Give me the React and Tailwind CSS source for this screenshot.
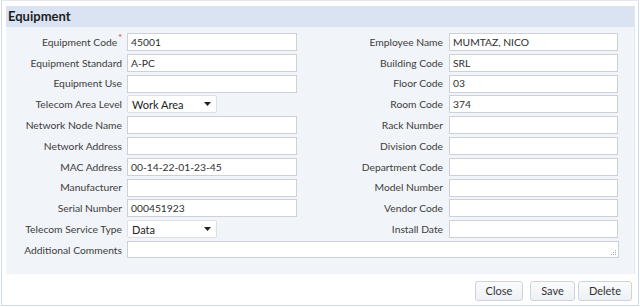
import React from 'react';

const leftFields = [
  { label: 'Equipment Code', value: '45001', required: true },
  { label: 'Equipment Standard', value: 'A-PC' },
  { label: 'Equipment Use', value: '' },
  { label: 'Telecom Area Level', value: 'Work Area', select: true },
  { label: 'Network Node Name', value: '' },
  { label: 'Network Address', value: '' },
  { label: 'MAC Address', value: '00-14-22-01-23-45' },
  { label: 'Manufacturer', value: '' },
  { label: 'Serial Number', value: '000451923' },
  { label: 'Telecom Service Type', value: 'Data', select: true },
];

const rightFields = [
  { label: 'Employee Name', value: 'MUMTAZ, NICO' },
  { label: 'Building Code', value: 'SRL' },
  { label: 'Floor Code', value: '03' },
  { label: 'Room Code', value: '374' },
  { label: 'Rack Number', value: '' },
  { label: 'Division Code', value: '' },
  { label: 'Department Code', value: '' },
  { label: 'Model Number', value: '' },
  { label: 'Vendor Code', value: '' },
  { label: 'Install Date', value: '' },
];

const TextBox = ({ value, width }) => (
  <div
    className={`${width} h-[18px] bg-white border border-[#cdd0d8] flex items-center px-[3px] text-[10.3px] text-[#2e2e2e] leading-none`}
  >
    {value}
  </div>
);

const Select = ({ value }) => (
  <div className="w-[90px] h-[18px] bg-white border border-[#dde0e6] rounded-[2px] flex items-center justify-between pl-[4px] pr-[5px] text-[11px] text-[#222] leading-none">
    <span>{value}</span>
    <svg width="7" height="4" viewBox="0 0 7 4">
      <path d="M0 0h7L3.5 4z" fill="#222" />
    </svg>
  </div>
);

const Label = ({ children, width, required }) => (
  <div className={`${width} text-right text-[10.3px] text-[#3d3d3d] leading-none whitespace-nowrap`}>
    {children}
    {required && <sup className="text-[#e0301e] text-[9px] ml-[1px]">*</sup>}
  </div>
);

const Button = ({ children, width }) => (
  <button
    type="button"
    className={`${width} h-[20px] rounded-[3px] border border-[#cfd4dc] bg-gradient-to-b from-[#fafbfc] to-[#eef1f5] text-[11px] text-[#333] leading-none`}
  >
    {children}
  </button>
);

export default function App() {
  return (
    <div
      className="w-[640px] h-[307px] bg-white"
      style={{ fontFamily: 'Lato, "Liberation Sans", sans-serif' }}
    >
      <div className="ml-[1px] w-[638px] h-[306px] border border-[#cbdcf1] border-t-[#e6e8eb] pt-[5px] pl-[4px] pr-[3px] flex flex-col">
        <div className="bg-[#f1f4f8] pb-[15px] border-r border-[#e3e8ef]">
          <div className="h-[21px] bg-[#d9e3f1] flex items-center pl-[2px] text-[13px] font-bold text-[#1e1e1e]">
            Equipment
          </div>
          <div className="pt-[6px] flex flex-col gap-[2.8px]">
            {leftFields.map((lf, i) => {
              const rf = rightFields[i];
              return (
                <div key={lf.label} className="flex items-center h-[18px]">
                  <Label width="w-[116px]" required={lf.required}>{lf.label}</Label>
                  <div className="w-[170px] ml-[5px]">
                    {lf.select ? <Select value={lf.value} /> : <TextBox value={lf.value} width="w-[170px]" />}
                  </div>
                  <Label width="w-[146px]">{rf.label}</Label>
                  <div className="ml-[6px]">
                    <TextBox value={rf.value} width="w-[169px]" />
                  </div>
                </div>
              );
            })}
            <div className="flex items-center h-[18px]">
              <Label width="w-[116px]">Additional Comments</Label>
              <div className="ml-[5px] relative w-[492px] h-[17px] bg-white border border-[#cdd0d8]">
                <svg className="absolute right-[1px] bottom-[1px]" width="6" height="6" viewBox="0 0 6 6">
                  <rect x="4" y="0" width="1" height="1" fill="#aaa" />
                  <rect x="2" y="2" width="1" height="1" fill="#aaa" />
                  <rect x="4" y="2" width="1" height="1" fill="#aaa" />
                  <rect x="0" y="4" width="1" height="1" fill="#aaa" />
                  <rect x="2" y="4" width="1" height="1" fill="#aaa" />
                  <rect x="4" y="4" width="1" height="1" fill="#aaa" />
                </svg>
              </div>
            </div>
          </div>
        </div>
        <div className="mt-[7px] flex justify-end pr-[3px]">
          <Button width="w-[48px]">Close</Button>
          <div className="w-[7px]" />
          <Button width="w-[45px]">Save</Button>
          <div className="w-[3px]" />
          <Button width="w-[54px]">Delete</Button>
        </div>
      </div>
    </div>
  );
}
